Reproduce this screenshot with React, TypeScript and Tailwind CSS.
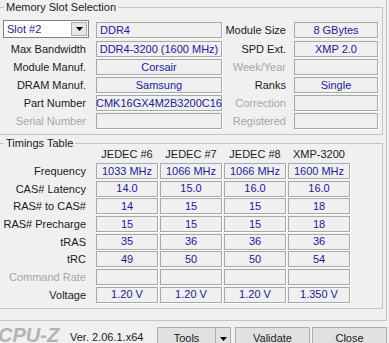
import React from "react"

const valueText = "text-[#1a1a9c]"

function Box({ className = "", children }: { className?: string; children?: React.ReactNode }) {
  return (
    <div
      className={`flex h-[16px] shrink-0 items-center whitespace-nowrap border border-[#a9a9a9] leading-none shadow-[1px_1px_0_#ffffff] ${valueText} ${className}`}
    >
      {children}
    </div>
  )
}

function Label({ className = "", dim = false, children }: { className?: string; dim?: boolean; children: React.ReactNode }) {
  return (
    <div className={`shrink-0 whitespace-nowrap text-right leading-[16px] ${dim ? "text-[#a6a6a6]" : "text-[#1a1a1a]"} ${className}`}>
      {children}
    </div>
  )
}

function Arrow() {
  return (
    <svg width="7" height="4" viewBox="0 0 7 4">
      <path d="M0 0h7L3.5 4z" fill="#000" />
    </svg>
  )
}

const slotRows = [
  { left: "Max Bandwidth", value: "DDR4-3200 (1600 MHz)", right: "SPD Ext.", rightValue: "XMP 2.0" },
  { left: "Module Manuf.", value: "Corsair", right: "Week/Year", rightValue: "", rightDim: true },
  { left: "DRAM Manuf.", value: "Samsung", right: "Ranks", rightValue: "Single" },
  { left: "Part Number", value: "CMK16GX4M2B3200C16", right: "Correction", rightValue: "", rightDim: true },
  { left: "Serial Number", value: "", leftDim: true, right: "Registered", rightValue: "", rightDim: true },
]

const timings = [
  { label: "Frequency", values: ["1033 MHz", "1066 MHz", "1066 MHz", "1600 MHz"] },
  { label: "CAS# Latency", values: ["14.0", "15.0", "16.0", "16.0"] },
  { label: "RAS# to CAS#", values: ["14", "15", "15", "18"] },
  { label: "RAS# Precharge", values: ["15", "15", "15", "18"] },
  { label: "tRAS", values: ["35", "36", "36", "36"] },
  { label: "tRC", values: ["49", "50", "50", "54"] },
  { label: "Command Rate", values: ["", "", "", ""], dim: true },
  { label: "Voltage", values: ["1.20 V", "1.20 V", "1.20 V", "1.350 V"] },
]

const columns = ["JEDEC #6", "JEDEC #7", "JEDEC #8", "XMP-3200"]

export default function App() {
  return (
    <div className="flex h-[343px] w-[389px] flex-col overflow-hidden bg-[#f0f0f0] font-['Liberation_Sans',Arial,sans-serif] text-[11px]">
      {/* tab page */}
      <div className="flex h-[321px] w-[387px] shrink-0 flex-col border-b border-r border-[#c4c4c4]">
        {/* Memory Slot Selection */}
        <div className="relative -ml-[2px] mt-[7px] h-[128px] w-[385px] shrink-0 border border-[#c4c4c4]">
          <span className="absolute -top-[8px] left-[5px] bg-[#f0f0f0] px-[2px] leading-[14px] text-[#1a1a1a]">
            Memory Slot Selection
          </span>
          <div className="flex flex-col pl-[4px] pt-[12px]">
            <div className="flex items-end">
              <div className="flex h-[18px] w-[86px] shrink-0 items-center border border-[#828282] bg-white">
                <span className={`flex-1 pl-[3px] leading-none ${valueText}`}>Slot #2</span>
                <div className="mr-[1px] flex h-[14px] w-[16px] items-center justify-center border border-[#adadad] bg-[#e6e6e6]">
                  <Arrow />
                </div>
              </div>
              <Box className="ml-[7px] w-[126px] pl-[3px]">DDR4</Box>
              <Label className="w-[64px]">Module Size</Label>
              <Box className="ml-[8px] w-[84px] justify-center">8 GBytes</Box>
            </div>
            <div className="mt-[3px] flex flex-col gap-[2px]">
              {slotRows.map((r) => (
                <div key={r.left} className="flex items-center">
                  <Label className="w-[83px]" dim={r.leftDim}>{r.left}</Label>
                  <Box className="ml-[10px] w-[126px] justify-center">{r.value}</Box>
                  <Label className="w-[64px]" dim={r.rightDim}>{r.right}</Label>
                  <Box className="ml-[8px] w-[84px] justify-center">{r.rightValue}</Box>
                </div>
              ))}
            </div>
          </div>
        </div>

        {/* Timings Table */}
        <div className="relative -ml-[2px] mt-[8px] h-[166px] w-[385px] shrink-0 border border-[#c4c4c4]">
          <span className="absolute -top-[8px] left-[5px] bg-[#f0f0f0] px-[2px] leading-[14px] text-[#1a1a1a]">
            Timings Table
          </span>
          <div className="flex flex-col pl-[4px] pt-[2px]">
            <div className="flex h-[16px] items-center">
              <div className="w-[83px] shrink-0" />
              <div className="ml-[10px] flex gap-[2px]">
                {columns.map((c) => (
                  <div key={c} className="w-[62px] text-center leading-[16px] text-[#1a1a1a]">
                    {c}
                  </div>
                ))}
              </div>
            </div>
            <div className="mt-[1px] flex flex-col gap-[1.7px]">
              {timings.map((t) => (
                <div key={t.label} className="flex items-center">
                  <Label className="w-[83px]" dim={t.dim}>{t.label}</Label>
                  <div className="ml-[10px] flex gap-[2px]">
                    {t.values.map((v, i) => (
                      <Box key={i} className="w-[62px] justify-center">{v}</Box>
                    ))}
                  </div>
                </div>
              ))}
            </div>
          </div>
        </div>
      </div>

      {/* footer */}
      <div className="flex h-[22px] shrink-0 items-start">
        <div className="-ml-[2px] mt-[4px] w-[72px] shrink-0 text-[20px] font-bold italic leading-none text-[#b3b3b3]">
          CPU-Z
        </div>
        <div className="mt-[8px] w-[87px] shrink-0 leading-[16px] text-[#222222]">Ver. 2.06.1.x64</div>
        <div className="mt-[6px] flex h-[23px] w-[74px] shrink-0 border border-[#adadad] bg-[#e1e1e1]">
          <div className="flex flex-1 items-center justify-center text-[#1a1a1a]">Tools</div>
          <div className="flex w-[15px] items-center justify-center border-l border-[#adadad]">
            <Arrow />
          </div>
        </div>
        <div className="ml-[4px] mt-[6px] flex h-[23px] w-[75px] shrink-0 items-center justify-center border border-[#adadad] bg-[#e1e1e1] text-[#1a1a1a]">
          Validate
        </div>
        <div className="ml-[2px] mt-[6px] flex h-[23px] w-[75px] shrink-0 items-center justify-center border border-[#adadad] bg-[#e1e1e1] text-[#1a1a1a]">
          Close
        </div>
      </div>
    </div>
  )
}
